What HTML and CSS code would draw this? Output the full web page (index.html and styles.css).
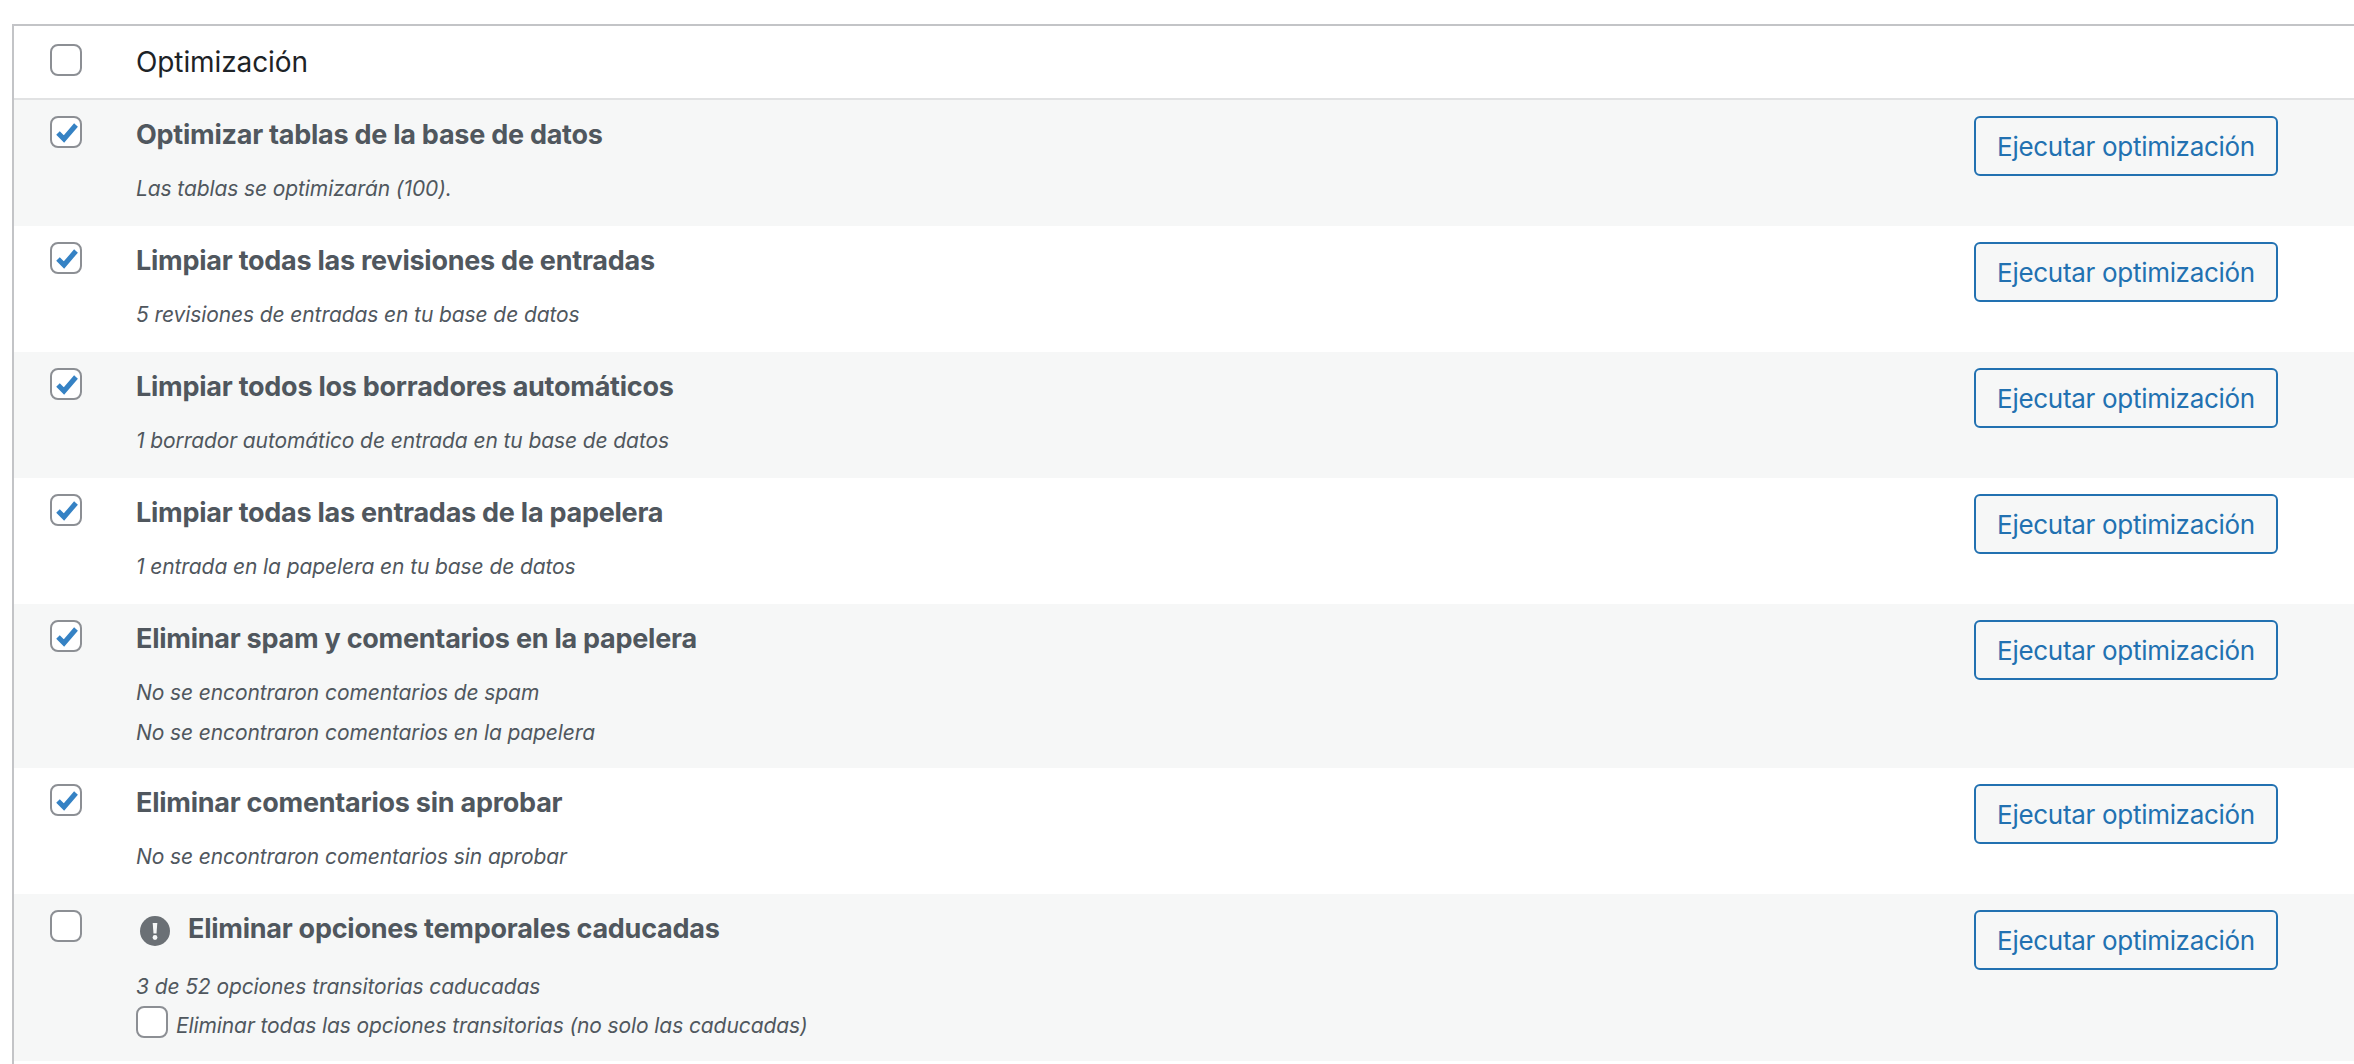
FILE: index.html
```html
<!DOCTYPE html>
<html lang="es">
<head>
<meta charset="utf-8">
<title>Optimización</title>
<link rel="stylesheet" href="styles.css">
</head>
<body>
<svg class="defs" width="0" height="0" aria-hidden="true"><symbol id="tick" viewBox="0 0 28 28"><path d="M6 15l6 6L24 7" fill="none" stroke="#3582c4" stroke-width="5"/></symbol></svg>
<div class="table">
  <div class="head">
    <span class="check"></span>
    <span class="head-title">Optimización</span>
  </div>
  <div class="row alt">
    <span class="check"><svg class="tick"><use href="#tick"/></svg></span>
    <div class="body"><h3 class="title">Optimizar tablas de la base de datos</h3><p class="note">Las tablas se optimizarán (100).</p></div>
    <button class="run">Ejecutar optimización</button>
  </div>
  <div class="row">
    <span class="check"><svg class="tick"><use href="#tick"/></svg></span>
    <div class="body"><h3 class="title">Limpiar todas las revisiones de entradas</h3><p class="note">5 revisiones de entradas en tu base de datos</p></div>
    <button class="run">Ejecutar optimización</button>
  </div>
  <div class="row alt">
    <span class="check"><svg class="tick"><use href="#tick"/></svg></span>
    <div class="body"><h3 class="title">Limpiar todos los borradores automáticos</h3><p class="note">1 borrador automático de entrada en tu base de datos</p></div>
    <button class="run">Ejecutar optimización</button>
  </div>
  <div class="row">
    <span class="check"><svg class="tick"><use href="#tick"/></svg></span>
    <div class="body"><h3 class="title">Limpiar todas las entradas de la papelera</h3><p class="note">1 entrada en la papelera en tu base de datos</p></div>
    <button class="run">Ejecutar optimización</button>
  </div>
  <div class="row alt">
    <span class="check"><svg class="tick"><use href="#tick"/></svg></span>
    <div class="body"><h3 class="title">Eliminar spam y comentarios en la papelera</h3><p class="note">No se encontraron comentarios de spam</p><p class="note">No se encontraron comentarios en la papelera</p></div>
    <button class="run">Ejecutar optimización</button>
  </div>
  <div class="row">
    <span class="check"><svg class="tick"><use href="#tick"/></svg></span>
    <div class="body"><h3 class="title">Eliminar comentarios sin aprobar</h3><p class="note">No se encontraron comentarios sin aprobar</p></div>
    <button class="run">Ejecutar optimización</button>
  </div>
  <div class="row alt">
    <span class="check"></span>
    <div class="body">
      <h3 class="title with-icon"><svg class="warn" viewBox="0 0 30 30"><circle cx="15" cy="15" r="15" fill="#6b7075"/><path d="M12.7 7h4.6l-.8 10.5h-3z" fill="#f6f7f7"/><circle cx="15" cy="21.5" r="2.4" fill="#f6f7f7"/></svg>Eliminar opciones temporales caducadas</h3>
      <p class="note">3 de 52 opciones transitorias caducadas</p>
      <p class="note option"><span class="check"></span>Eliminar todas las opciones transitorias (no solo las caducadas)</p>
    </div>
    <button class="run">Ejecutar optimización</button>
  </div>
</div>
</body>
</html>
```
FILE: styles.css
```css
html, body {
  margin: 0;
  height: 1064px;
  overflow: hidden;
  background: #fff;
}
body {
  padding: 24px 0 0 12px;
  box-sizing: border-box;
  font-family: Inter, "Liberation Sans", sans-serif;
  color: #50575e;
}
.defs { position: absolute; }
.table {
  border-top: 2px solid #c3c4c7;
  border-left: 2px solid #c3c4c7;
  min-height: 1100px;
}
.head {
  display: flex;
  align-items: flex-start;
  height: 74px;
  padding: 18px 0 0 36px;
  box-sizing: border-box;
  border-bottom: 2px solid #e1e2e3;
}
.head-title {
  margin-left: 54px;
  font-size: 28px;
  line-height: 36px;
  letter-spacing: -0.1px;
  color: #1d2327;
}
.row {
  display: flex;
  align-items: flex-start;
  min-height: 126px;
  box-sizing: border-box;
  padding: 16px 76px 15px 36px;
}
.alt { background: #f6f7f7; }
.check {
  flex: none;
  width: 32px;
  height: 32px;
  box-sizing: border-box;
  border: 2px solid #8c8f94;
  border-radius: 8px;
  background: #fff;
  display: block;
}
.tick { display: block; width: 28px; height: 28px; }
.body {
  flex: 1;
  margin-left: 54px;
}
.title {
  margin: 0 0 17px;
  padding-top: 1px;
  height: 35px;
  font-size: 27px;
  line-height: 36px;
  letter-spacing: -0.25px;
  font-weight: 700;
  color: #50575e;
}
.with-icon {
  display: flex;
  align-items: center;
  margin-bottom: 21px;
}
.warn {
  flex: none;
  width: 30px;
  height: 30px;
  margin: 5px 18px 0 4px;
}
.note {
  margin: 0;
  font-size: 21px;
  line-height: 40px;
  letter-spacing: -0.1px;
  font-style: italic;
}
.option {
  display: flex;
  align-items: flex-start;
  margin-top: -1px;
}
.option .check { margin-right: 8px; }
.run {
  flex: none;
  width: 304px;
  height: 60px;
  box-sizing: border-box;
  padding: 2px 0 0;
  border: 2px solid #2271b1;
  border-radius: 6px;
  background: #f6f7f7;
  color: #2271b1;
  font-family: inherit;
  font-size: 26px;
  letter-spacing: -0.3px;
  line-height: 54px;
}
```
